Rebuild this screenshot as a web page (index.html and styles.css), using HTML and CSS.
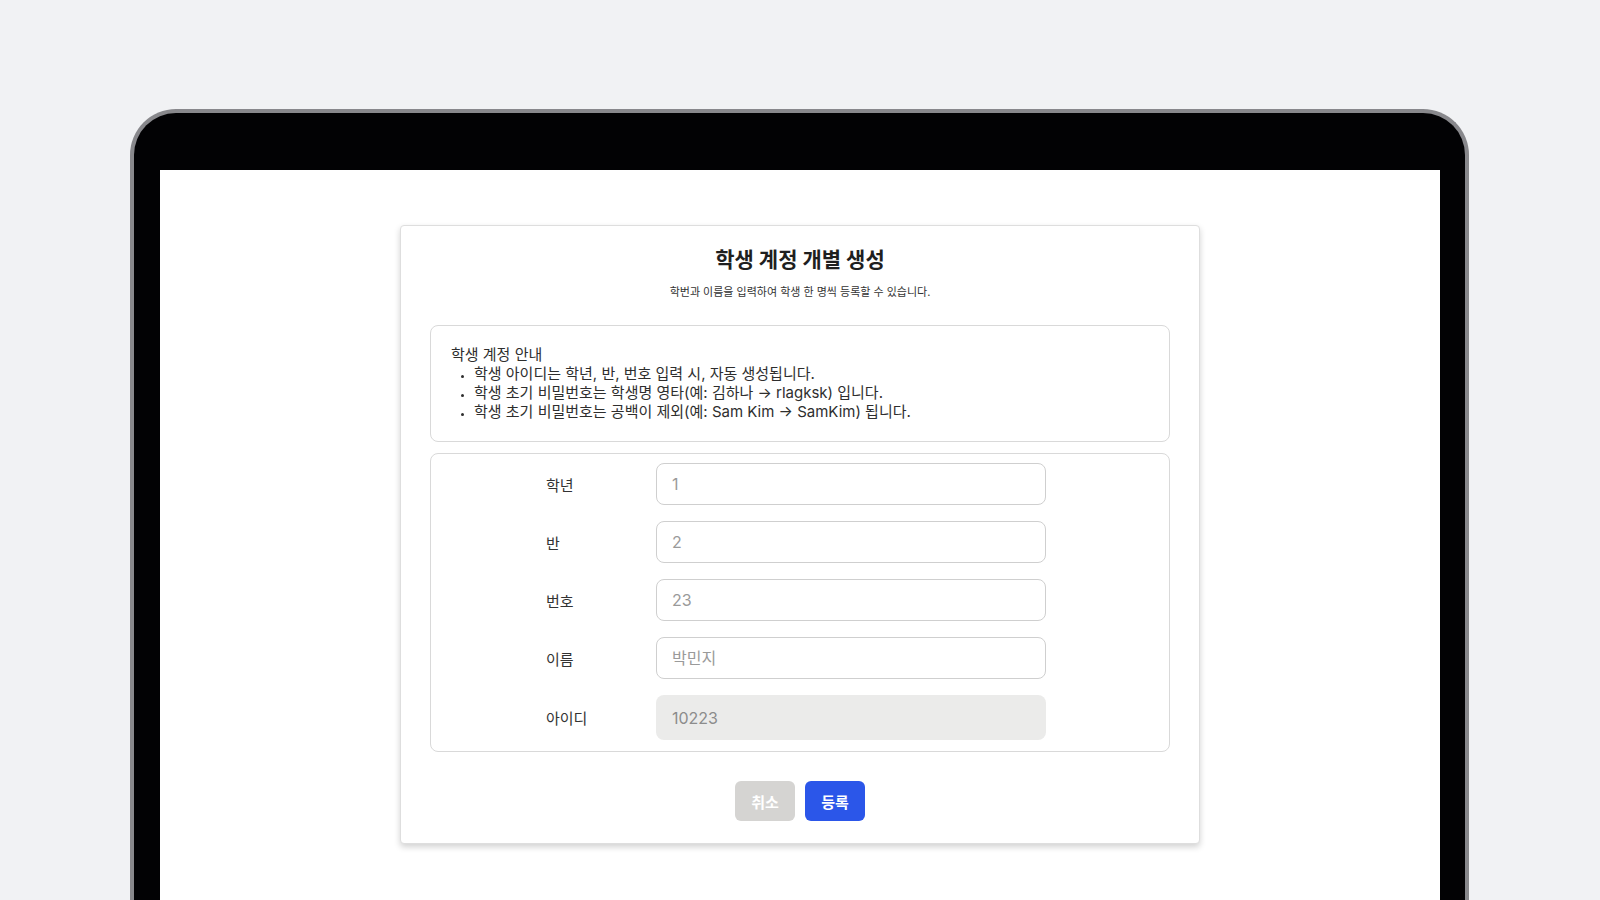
FILE: index.html
```html
<!DOCTYPE html>
<html lang="ko">
<head>
<meta charset="utf-8">
<title>학생 계정 개별 생성</title>
<link rel="stylesheet" href="styles.css">
</head>
<body>
<div class="device">
  <div class="screen">
    <div class="card">
      <h1 class="title">학생 계정 개별 생성</h1>
      <p class="subtitle">학번과 이름을 입력하여 학생 한 명씩 등록할 수 있습니다.</p>
      <div class="info">
        <div class="info-head">학생 계정 안내</div>
        <ul class="info-list">
          <li>학생 아이디는 학년, 반, 번호 입력 시, 자동 생성됩니다.</li>
          <li>학생 초기 비밀번호는 학생명 영타(예: 김하나 → rlagksk) 입니다.</li>
          <li>학생 초기 비밀번호는 공백이 제외(예: Sam Kim → SamKim) 됩니다.</li>
        </ul>
      </div>
      <div class="form">
        <label class="label">학년</label><input class="field" placeholder="1">
        <label class="label">반</label><input class="field" placeholder="2">
        <label class="label">번호</label><input class="field" placeholder="23">
        <label class="label">이름</label><input class="field" placeholder="박민지">
        <label class="label">아이디</label><input class="field field-disabled" value="10223" disabled>
      </div>
      <div class="actions">
        <button class="btn btn-cancel">취소</button>
        <button class="btn btn-primary">등록</button>
      </div>
    </div>
  </div>
</div>
</body>
</html>
```
FILE: styles.css
```css
* { box-sizing: border-box; }
html, body { margin: 0; padding: 0; }
body {
  background: #f1f2f4;
  font-family: Inter, "Noto Sans CJK KR", sans-serif;
  color: #222;
  height: 900px;
  overflow: hidden;
}
.device {
  width: 1339px;
  margin: 109px 0 0 130px;
  border: 4px solid #88888c;
  border-bottom: none;
  border-radius: 46px 46px 0 0;
  background: #020204;
  padding: 57px 25px 0 26px;
}
.screen {
  background: #fff;
  height: 760px;
  padding-top: 55px;
}
.card {
  width: 800px;
  margin: 0 auto;
  background: #fff;
  border: 1px solid #dedede;
  border-radius: 4px;
  box-shadow: 0 3px 6px rgba(0,0,0,0.18);
  padding: 20px 29px 22px;
}
.title {
  margin: 0;
  text-align: center;
  font-size: 21px;
  line-height: 28px;
  font-weight: 700;
  color: #1f1f1f;
}
.subtitle {
  margin: 10px 0 0;
  text-align: center;
  font-size: 11px;
  line-height: 16px;
  color: #333;
}
.info {
  margin-top: 25px;
  border: 1px solid #d9d9d9;
  border-radius: 8px;
  padding: 19px 20px 20px;
  font-size: 15px;
  line-height: 19px;
  color: #2e2e2e;
}
.info-list {
  margin: 0;
  padding-left: 23px;
  list-style: disc;
}
.info-list li::marker { font-size: 10px; }
.form {
  margin-top: 11px;
  border: 1px solid #d9d9d9;
  border-radius: 8px;
  padding: 9px 8px 11px 0;
  display: grid;
  grid-template-columns: 110px 390px;
  justify-content: center;
  align-items: center;
  row-gap: 16px;
}
.label {
  font-size: 15px;
  color: #333;
}
.field {
  height: 42px;
  border: 1px solid #cfcfcf;
  border-radius: 8px;
  padding: 0 15px;
  font-family: Inter, "Noto Sans CJK KR", sans-serif;
  font-size: 16px;
  color: #333;
  background: #fff;
  outline: none;
}
.field::placeholder { color: #9a9a9a; }
.field-disabled {
  height: 45px;
  border: none;
  background: #ebebea;
  color: #8c8c8c;
  padding-left: 16px;
  -webkit-text-fill-color: #8c8c8c;
  opacity: 1;
}
.actions {
  display: flex;
  justify-content: center;
  gap: 10px;
  margin-top: 29px;
}
.btn {
  width: 60px;
  height: 40px;
  border: none;
  border-radius: 6px;
  font-family: Inter, "Noto Sans CJK KR", sans-serif;
  font-size: 15px;
  font-weight: 700;
  color: #fff;
  padding: 0;
}
.btn-cancel { background: #d5d4d2; }
.btn-primary { background: #2b56e9; }
```
